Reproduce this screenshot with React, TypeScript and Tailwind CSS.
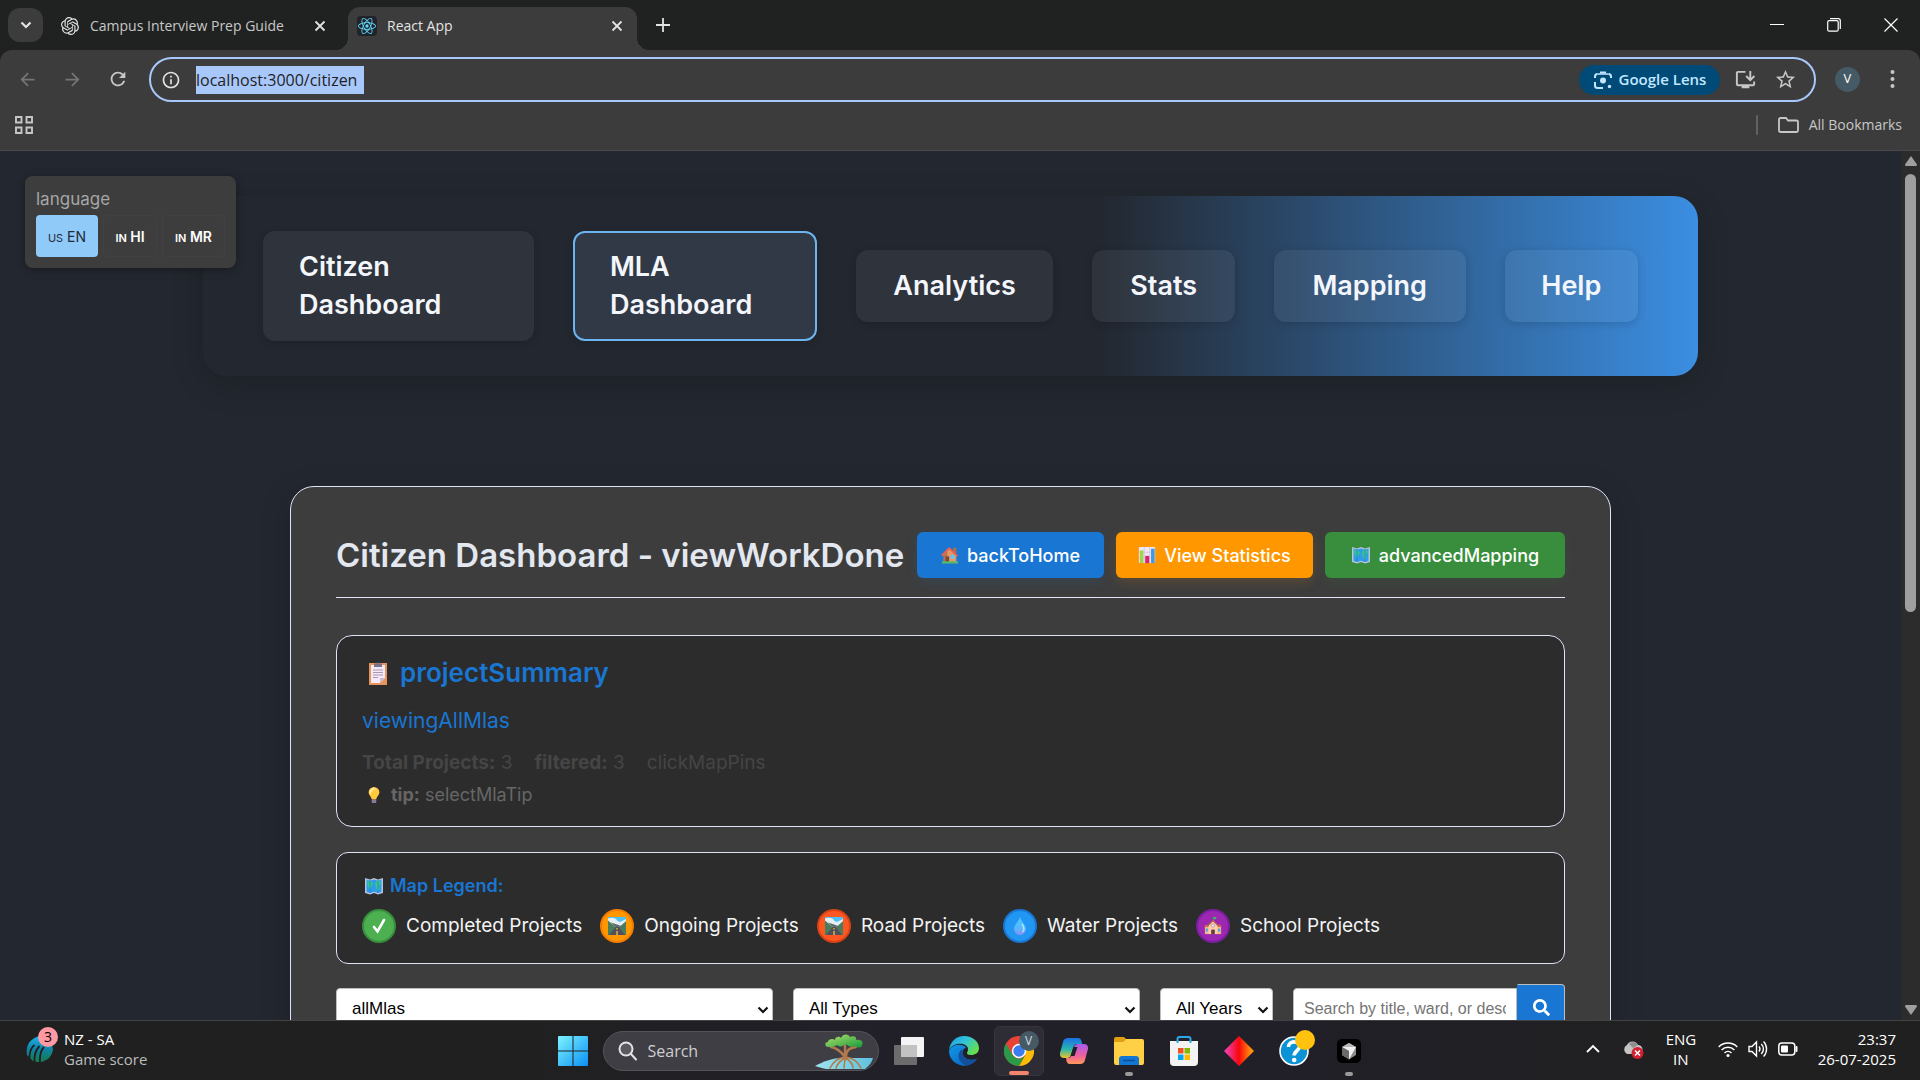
import React from "react";
import type { ReactNode } from "react";
import { SiOpenai, SiReact } from "react-icons/si";
import {
  MdArrowBack,
  MdArrowForward,
  MdInfoOutline,
  MdOutlineInstallDesktop,
  MdRefresh,
  MdStarBorder,
} from "react-icons/md";
import { FaSearch } from "react-icons/fa";

/* ---------- small drawings ---------- */

function ClipboardIcon() {
  return (
    <svg viewBox="0 0 20 24" className="h-6 w-5" aria-hidden="true">
      <rect x="1" y="2" width="18" height="22" fill="#e8935a" />
      <path d="M3 4h14v13l-5 5H3z" fill="#f3e9f7" />
      <path d="M12 22v-5h5z" fill="#cbb8d4" />
      <path d="M6 4V2.600h2.500a1.600 1.600 0 0 1 3 0H14V6H6z" fill="#7d7186" />
      <path d="M5 9h10M5 11.500h10M5 14h10M5 16.500h5" stroke="#a79ab0" strokeWidth="1" />
    </svg>
  );
}

function BulbIcon() {
  return (
    <svg viewBox="0 0 14 20" className="h-[18px] w-3.5" aria-hidden="true">
      <path d="M7 1a6 6 0 0 0-6 6c0 3 3 4.500 3.500 8h5C10 11.500 13 10 13 7a6 6 0 0 0-6-6z" fill="#ffc83d" />
      <path d="M7 2a5 5 0 0 0-5 5c0 1 .4 2 1 2.600C4 6 6 4 9 3.500 8.500 2.500 8 2 7 2z" fill="#ffe9a0" />
      <rect x="4.500" y="15" width="5" height="4" rx="1" fill="#8c7899" />
    </svg>
  );
}

function MapIcon() {
  return (
    <svg viewBox="0 0 20 20" className="h-5 w-5" aria-hidden="true">
      <path d="M1 2l5 1.500L10 2l4 1.500L19 2v15l-5 1.500L10 17l-4 1.500L1 17z" fill="#b8c4dd" />
      <path d="M2.500 3.500L6 4.700l4-1.300 4 1.300 3.500-1.200v12.500L14 17l-4-1.300L6 17l-3.500-1z" fill="#2f9bea" />
      <path d="M3 5l4 .5 2 2-2 3-1 3-2-3zM12 5l4 .2 1 2-2 2 .5 4-2 2-1.500-4-1-3z" fill="#37c98b" />
      <path d="M6 4v13M14 4v13" stroke="#1b78c9" strokeWidth=".7" />
    </svg>
  );
}

function HouseIcon() {
  return (
    <svg viewBox="0 0 20 20" className="h-[18px] w-[18px]" aria-hidden="true">
      <rect x="13.500" y="2" width="3.500" height="6" fill="#b56b4a" />
      <path d="M3 9l7-6 7 7v8H3z" fill="#e09a6a" />
      <path d="M3 9l4-4v13H3z" fill="#b8734f" />
      <path d="M9 1L0 10l1.500 1.500L9 4l8.500 8L19 10.500z" fill="#f0604d" />
      <rect x="5" y="11.500" width="4" height="6.500" fill="#7b4a3d" />
      <circle cx="13" cy="12" r="2.500" fill="#63c5f5" />
      <rect x="1" y="17" width="18" height="2.500" fill="#57b96a" />
    </svg>
  );
}

function ChartIcon() {
  return (
    <svg viewBox="0 0 20 20" className="h-[18px] w-[18px]" aria-hidden="true">
      <rect x="1" y="1" width="18" height="18" rx="1" fill="#efe6f3" />
      <path d="M1 7h18M1 13h18M7 1v18M13 1v18" stroke="#cfc0d8" strokeWidth=".8" />
      <rect x="2" y="5" width="4" height="14" fill="#9bd84f" />
      <rect x="8" y="11" width="4.500" height="8" fill="#d8246b" />
      <rect x="14.500" y="3" width="4" height="16" fill="#3b9ae8" />
    </svg>
  );
}

function RoadIcon() {
  return (
    <svg viewBox="0 0 18 18" className="h-[18px] w-[18px]" aria-hidden="true">
      <rect width="18" height="18" fill="#4a7d5b" />
      <path d="M0 0h18v4l-6 5H0z" fill="#4fc0f5" />
      <path d="M0 1.500C4 0 8 1 9.500 4l2.500 1 6-3v2l-6 5.500H6L1.500 14 0 13z" fill="#e6eef2" />
      <path d="M0 3.500L7 9.500 0 16z" fill="#4a7d5b" />
      <path d="M3 5.500l4 4h4l6 3-5-4z" fill="#5a6a68" />
      <path d="M1 18L8 9.500h2.500L17 18z" fill="#504f5b" />
      <path d="M9 11v1.500M9 14v4" stroke="#ffc83d" strokeWidth="1.200" />
    </svg>
  );
}

function DropIcon() {
  return (
    <svg viewBox="0 0 14 20" className="h-5 w-3.5" aria-hidden="true">
      <defs>
        <linearGradient id="drop" x1="0" y1="0" x2="0" y2="1">
          <stop offset="0" stopColor="#4cc6ff" />
          <stop offset=".6" stopColor="#55b9ff" />
          <stop offset="1" stopColor="#8f8cf5" />
        </linearGradient>
      </defs>
      <path d="M7 1c1 4 6 8 6 12a6 6 0 0 1-12 0C1 9 6 5 7 1z" fill="url(#drop)" />
      <path d="M9 8c2 3 2.500 6 .5 8" stroke="#a8e6ff" strokeWidth="1.500" fill="none" />
    </svg>
  );
}

function SchoolIcon() {
  return (
    <svg viewBox="0 0 20 20" className="h-[18px] w-[18px]" aria-hidden="true">
      <path d="M10 0v5" stroke="#6b5a70" strokeWidth="1" />
      <path d="M10 0h3.500v2.500H10z" fill="#38b668" />
      <rect x="1" y="11" width="18" height="8" fill="#f4b489" />
      <path d="M0 11h6V8.500H2zM14 11h6l-2-2.500h-4z" fill="#c9675a" />
      <path d="M5 9l5-5 5 5v10H5z" fill="#ffd0a8" />
      <path d="M4.500 9.500L10 4l5.500 5.500" stroke="#b75a50" strokeWidth="1.200" fill="none" />
      <circle cx="10" cy="9.500" r="1.800" fill="#efe8f5" stroke="#887592" strokeWidth=".6" />
      <rect x="2" y="13" width="2.500" height="3" fill="#4aa8ea" />
      <rect x="15.500" y="13" width="2.500" height="3" fill="#4aa8ea" />
      <rect x="8" y="14" width="4" height="5" fill="#5b3f48" />
    </svg>
  );
}

function CheckGlyph() {
  return (
    <svg viewBox="0 0 18 18" className="h-[18px] w-[18px]" aria-hidden="true">
      <path d="M4 10l3.500 4.500L14 3" fill="none" stroke="#fff" strokeWidth="2.600" strokeLinecap="round" />
    </svg>
  );
}

function LensIcon() {
  return (
    <svg viewBox="0 0 20 20" className="h-5 w-5" fill="none" stroke="#c2e7ff" strokeWidth="2" aria-hidden="true">
      <path d="M2 8V6.500A2.500 2.500 0 0 1 4.500 4M7 2.500h6M15.500 4A2.500 2.500 0 0 1 18 6.500V8M2 12v3.500A2.500 2.500 0 0 0 4.500 18H10" />
      <path d="M4.500 4h11" strokeWidth="1.500" />
      <circle cx="10" cy="10.500" r="3" fill="#c2e7ff" stroke="none" />
      <circle cx="16.500" cy="16.500" r="1.700" fill="#c2e7ff" stroke="none" />
    </svg>
  );
}

function CloseGlyph() {
  return (
    <svg viewBox="0 0 12 12" className="h-3 w-3" stroke="currentColor" strokeWidth="1.800" aria-hidden="true">
      <path d="M1.500 1.500l9 9M10.500 1.500l-9 9" />
    </svg>
  );
}

function SportIcon() {
  return (
    <svg viewBox="0 0 28 28" className="h-7 w-7" aria-hidden="true">
      <defs>
        <linearGradient id="ball" x1="0" y1="0" x2="0" y2="1">
          <stop offset="0" stopColor="#19b5ee" />
          <stop offset=".5" stopColor="#0f83a6" />
          <stop offset="1" stopColor="#157a4e" />
        </linearGradient>
      </defs>
      <path d="M1 20C-1 9 6 2 15 1c9 4 12 9 12 14-1 5-4 9-7 10l-4 2h-5l-4-1-3-3z" fill="url(#ball)" />
      <path d="M3.500 23c0-7 2-11 5-13M8.500 27c-.5-8 2-13 5-16M14 28c-.5-8 1-13 4-16" stroke="#202020" strokeWidth="1.800" fill="none" />
    </svg>
  );
}

function WindowsLogo() {
  return (
    <svg viewBox="0 0 30 30" className="h-[30px] w-[30px]" aria-hidden="true">
      <defs>
        <linearGradient id="win" x1="0" y1="0" x2="1" y2="1">
          <stop offset="0" stopColor="#7df3ff" />
          <stop offset="1" stopColor="#0a90f5" />
        </linearGradient>
      </defs>
      <path d="M1 0h13.500v14.500H0V1a1 1 0 0 1 1-1zM15.500 0H29a1 1 0 0 1 1 1v13.500H15.500zM0 15.500h14.500V30H1a1 1 0 0 1-1-1zM15.500 15.500H30V29a1 1 0 0 1-1 1H15.500z" fill="url(#win)" />
    </svg>
  );
}

function TreeIcon() {
  return (
    <svg viewBox="0 0 60 36" className="h-9 w-[60px]" aria-hidden="true">
      <defs>
        <linearGradient id="leaf" x1="0" y1="0" x2="1" y2="1">
          <stop offset="0" stopColor="#b5e36a" />
          <stop offset="1" stopColor="#159a3e" />
        </linearGradient>
        <linearGradient id="water" x1="0" y1="0" x2="1" y2="0">
          <stop offset="0" stopColor="#9fe3ee" />
          <stop offset="1" stopColor="#5fc0dd" />
        </linearGradient>
      </defs>
      <path d="M1 33c9-5 18-8 27-8h31c-1 4-4 8-8 11H12c-4-1-8-2-11-3z" fill="url(#water)" />
      <g fill="none" stroke="#b07a4c" strokeLinecap="round">
        <path d="M17 14c5 1 9 3 13 9M42 14c-6 1-9 2-10 9M31 12v14" strokeWidth="2.500" />
        <path d="M31 24c-7 1-12 5-15 11M31 25c-5 3-8 6-9 10M32 25c-2 4-2 7-2 10M32 24c7 1 12 5 15 11M32 25c4 3 7 6 7 10" strokeWidth="1.600" />
      </g>
      <path d="M14 14c-3 0-4-5 0-5 0-3 5-4 7-2 0-4 5-4 6-2 2-5 8-4 9-1 5-2 7 1 6 3 5-1 8 2 6 5 1 3-5 3-8 1-3 2-6 0-8-2-3 3-8 3-9 1-3 2-6 2-9 2z" fill="url(#leaf)" />
    </svg>
  );
}

function TaskViewIcon() {
  return (
    <svg viewBox="0 0 30 30" className="h-[30px] w-[30px]" aria-hidden="true">
      <rect x="0" y="9" width="23" height="20" rx="1" fill="#6c6c6c" />
      <rect x="7" y="1" width="23" height="20" rx="1" fill="#f4f4f4" />
      <path d="M7 9h16v12H7z" fill="#c2c2c2" />
    </svg>
  );
}

function EdgeIcon() {
  return (
    <svg viewBox="0 0 30 30" className="h-[30px] w-[30px]" aria-hidden="true">
      <defs>
        <linearGradient id="edgeTop" x1="0" y1="0" x2="1" y2=".6">
          <stop offset="0" stopColor="#1b9de2" />
          <stop offset=".5" stopColor="#2fc3dc" />
          <stop offset="1" stopColor="#66e04c" />
        </linearGradient>
        <linearGradient id="edgeLow" x1="0" y1="0" x2="1" y2="1">
          <stop offset="0" stopColor="#1199e8" />
          <stop offset="1" stopColor="#0a5cb8" />
        </linearGradient>
      </defs>
      <path d="M0 15a15 15 0 0 0 21 13.500c3-1 5-3 7-6-4 2-10 2-13-2-3-4-1-8 2-9-3-4-14-4-17 3.500z" fill="url(#edgeLow)" />
      <path d="M13 13c-5 4-5 12 3 16 6 0 9-2 12-6.500-4 2-10 2-13-2-2-3-2-5-2-7.500z" fill="#124f9d" />
      <path d="M0 14C1 6 7 0 15 0c9 0 15 6 15 12 0 5-4 7-8 7-3 0-4-1-4-2s1-1 1-4C19 7 5 5 0 14z" fill="url(#edgeTop)" />
    </svg>
  );
}

function ChromeIcon() {
  return (
    <svg viewBox="0 0 30 30" className="h-[30px] w-[30px]" aria-hidden="true">
      <circle cx="15" cy="15" r="15" fill="#ea4335" />
      <path d="M28 7.500A15 15 0 0 1 15 30l6.500-11.250L15 7.500z" fill="#fbbc04" />
      <path d="M2 7.500L8.500 18.750a7.500 7.500 0 0 0 13 0L15 30A15 15 0 0 1 2 7.500z" fill="#2a9a48" />
      <circle cx="15" cy="15" r="7.200" fill="#fff" />
      <circle cx="15" cy="15" r="5.700" fill="#3b7ded" />
    </svg>
  );
}

function CopilotIcon() {
  return (
    <svg viewBox="0 0 28 28" className="h-7 w-7" aria-hidden="true">
      <defs>
        <linearGradient id="copA" x1="0" y1="0" x2="0" y2="1">
          <stop offset="0" stopColor="#1c6fe8" />
          <stop offset=".55" stopColor="#27b5b0" />
          <stop offset="1" stopColor="#e8c52c" />
        </linearGradient>
        <linearGradient id="copB" x1="0" y1="0" x2="0" y2="1">
          <stop offset="0" stopColor="#a65cf0" />
          <stop offset=".6" stopColor="#f0609a" />
          <stop offset="1" stopColor="#ff9a57" />
        </linearGradient>
      </defs>
      <path d="M8 1h10c2 0 3 1 3.500 3l.5 3h-5c-2 0-3 1-3.600 3L11 18c-.6 2-2 3-4 3H4c-3 0-4.500-2-4-5L3 5c.8-3 2.500-4 5-4z" fill="url(#copA)" />
      <path d="M20 27H10c-2 0-3-1-3.500-3L6 21h2c2 0 3-1 3.600-3L14 10c.6-2 2-3 4-3h6c3 0 4.500 2 4 5l-3 11c-.8 3-2.500 4-5 4z" fill="url(#copB)" />
      <path d="M13.500 10h4L14.500 19h-4z" fill="#201f27" />
    </svg>
  );
}

function ExplorerIcon() {
  return (
    <svg viewBox="0 0 30 28" className="h-7 w-[30px]" aria-hidden="true">
      <path d="M0 2a2 2 0 0 1 2-2h8l3 3h-2L9 6H0z" fill="#e0a010" />
      <path d="M0 5h9l3-3h16a2 2 0 0 1 2 2v22a2 2 0 0 1-2 2H2a2 2 0 0 1-2-2z" fill="#ffcf46" />
      <path d="M5 28v-6a3 3 0 0 1 3-3h14a3 3 0 0 1 3 3v6z" fill="#1277d3" />
      <path d="M9 23.500h12" stroke="#0a4f98" strokeWidth="1.500" />
    </svg>
  );
}

function StoreIcon() {
  return (
    <svg viewBox="0 0 30 30" className="h-[30px] w-[30px]" aria-hidden="true">
      <path d="M1 5h28v21a4 4 0 0 1-4 4H5a4 4 0 0 1-4-4z" fill="#f3f3f3" />
      <path d="M8.500 7V3a2 2 0 0 1 2-2h9a2 2 0 0 1 2 2v4" fill="none" stroke="#29a9ea" strokeWidth="2" />
      <rect x="9" y="12" width="5.500" height="5.500" fill="#f25022" />
      <rect x="15.500" y="12" width="5.500" height="5.500" fill="#7fba00" />
      <rect x="9" y="18.500" width="5.500" height="5.500" fill="#00a4ef" />
      <rect x="15.500" y="18.500" width="5.500" height="5.500" fill="#ffb900" />
    </svg>
  );
}

function DiamondIcon() {
  return (
    <svg viewBox="0 0 30 30" className="h-[30px] w-[30px]" aria-hidden="true">
      <defs>
        <linearGradient id="gem" x1="0" y1="0" x2="1" y2="0">
          <stop offset=".1" stopColor="#f53aa5" />
          <stop offset=".5" stopColor="#f8060a" />
          <stop offset=".9" stopColor="#ff9410" />
        </linearGradient>
      </defs>
      <path d="M15 0l15 15-15 15L0 15z" fill="url(#gem)" />
    </svg>
  );
}

function HelpIcon() {
  return (
    <svg viewBox="0 0 30 30" className="h-[30px] w-[30px]" aria-hidden="true">
      <circle cx="15" cy="15" r="14" fill="#0c93d6" stroke="#fff" strokeWidth="1.600" />
      <path d="M9.500 11c0-7 11-6.500 11-.5 0 4.500-5.300 4-5.300 9" fill="none" stroke="#fff" strokeWidth="3.600" />
      <circle cx="15.200" cy="24" r="2.300" fill="#fff" />
    </svg>
  );
}

function CubeIcon() {
  return (
    <svg viewBox="0 0 24 24" className="h-6 w-6" aria-hidden="true">
      <rect width="24" height="24" rx="5" fill="#000" />
      <path d="M12 4l7 4v8l-7 4.500L5 16V8z" fill="#8c8c8c" />
      <path d="M5 8h14l-7 12.500V12z" fill="#efefef" />
      <path d="M5 8l7 4v8.500L5 16z" fill="#6a6a6a" />
      <path d="M12 4l7 4H5z" fill="#b9b9b9" />
    </svg>
  );
}

/* ---------- browser chrome ---------- */

function TabStrip() {
  return (
    <header className="flex h-[50px] shrink-0 items-end bg-[#202221] text-[#e3e3e3]">
      <button aria-label="Search tabs" className="mb-2 ml-2 flex h-[34px] w-[35px] items-center justify-center rounded-xl bg-[#3c3c3c]">
        <svg viewBox="0 0 12 12" className="h-3 w-3" fill="none" stroke="currentColor" strokeWidth="2.200" aria-hidden="true">
          <path d="M1.500 3.500L6 8l4.500-4.500" />
        </svg>
      </button>
      <div className="flex h-[43px] w-[305px] items-center pb-2 pl-[18px] pr-[22px] pt-0.5">
        <SiOpenai className="h-[18px] w-[18px]" />
        <span className="ml-[11px] flex-1 whitespace-nowrap text-[14px] text-[#c7c7c7]">Campus Interview Prep Guide</span>
        <button aria-label="Close Campus Interview Prep Guide"><CloseGlyph /></button>
      </div>
      <div className="relative flex h-[43px] w-[289px] items-center rounded-t-xl bg-[#3c3c3c] pb-2 pl-[9px] pr-3.5 pt-0.5">
        <span className="absolute -left-3 bottom-0 h-3 w-3 bg-[radial-gradient(circle_at_0_0,transparent_12px,#3c3c3c_12px)]" />
        <span className="absolute -right-3 bottom-0 h-3 w-3 bg-[radial-gradient(circle_at_100%_0,transparent_12px,#3c3c3c_12px)]" />
        <span className="flex h-5 w-5 items-center justify-center rounded-sm bg-[#20232a]">
          <SiReact className="h-[18px] w-[18px] text-[#61dafb]" />
        </span>
        <span className="ml-2.5 flex-1 text-[14px]">React App</span>
        <button aria-label="Close React App"><CloseGlyph /></button>
      </div>
      <button aria-label="New tab" className="mb-[18px] ml-[19px]">
        <svg viewBox="0 0 14 14" className="h-3.5 w-3.5" stroke="currentColor" strokeWidth="1.800" aria-hidden="true">
          <path d="M7 0v14M0 7h14" />
        </svg>
      </button>
      <div className="mb-[18px] ml-auto flex items-center gap-[43px] pr-[22px] text-white">
        <button aria-label="Minimize">
          <svg viewBox="0 0 14 14" className="h-3.5 w-3.5" stroke="currentColor" aria-hidden="true"><path d="M0 6.500h14" /></svg>
        </button>
        <button aria-label="Restore">
          <svg viewBox="0 0 14 14" className="h-3.5 w-3.5" fill="none" stroke="currentColor" strokeWidth="1.200" aria-hidden="true">
            <rect x=".7" y="2.700" width="10.500" height="10.500" rx="1.500" />
            <path d="M3 .7h8.300a2 2 0 0 1 2 2V11" />
          </svg>
        </button>
        <button aria-label="Close window">
          <svg viewBox="0 0 14 14" className="h-3.5 w-3.5" stroke="currentColor" strokeWidth="1.200" aria-hidden="true"><path d="M.5.5l13 13M13.500.5l-13 13" /></svg>
        </button>
      </div>
    </header>
  );
}

function Toolbar() {
  return (
    <div className="bg-[#202221]">
      <div className="flex h-[60px] items-center rounded-t-xl bg-[#3c3c3c] pb-0.5 text-[#c7c7c7]">
        <div className="ml-[17px] flex w-[132px] items-center gap-6">
          <button aria-label="Back"><MdArrowBack className="h-[21px] w-[21px] text-[#757575]" /></button>
          <button aria-label="Forward"><MdArrowForward className="h-[21px] w-[21px] text-[#757575]" /></button>
          <button aria-label="Reload"><MdRefresh className="h-[22px] w-[22px]" /></button>
        </div>
        <div className="mt-px flex h-[45px] flex-1 items-center rounded-full border-2 border-[#a8c7fa] bg-[#3c3c3c] pl-[10px] pr-[17px]">
          <MdInfoOutline className="h-5 w-5 shrink-0 text-[#e3e3e3]" />
          <label className="ml-[15px] flex flex-1 items-center">
            <span className="sr-only">Address</span>
            <input readOnly defaultValue="localhost:3000/citizen" className="h-7 w-[168px] bg-[#a8c7fa] text-[16px] text-[#1f1f1f] outline-none" />
          </label>
          <button className="flex h-[30px] w-[141px] items-center justify-center gap-1.5 rounded-full bg-[#004a77] text-[15px] font-semibold text-[#c2e7ff]">
            <LensIcon />
            Google Lens
          </button>
          <button aria-label="Install" className="ml-3.5"><MdOutlineInstallDesktop className="h-[23px] w-[23px]" /></button>
          <button aria-label="Bookmark this tab" className="ml-[17px]"><MdStarBorder className="h-[23px] w-[23px]" /></button>
        </div>
        <button aria-label="Profile" className="ml-[19px] flex h-[25px] w-[25px] items-center justify-center rounded-full bg-[#455a64] text-[13px] text-white">V</button>
        <button aria-label="Menu" className="ml-[30px] mr-[25px]">
          <svg viewBox="0 0 5 20" className="h-5 w-[5px]" fill="currentColor" aria-hidden="true">
            <circle cx="2.500" cy="3" r="2" /><circle cx="2.500" cy="10" r="2" /><circle cx="2.500" cy="17" r="2" />
          </svg>
        </button>
      </div>
      <div className="flex h-[41px] items-center border-b border-[#4a4a4a] bg-[#3c3c3c] pb-[11px] pl-[15px] pr-[18px] text-[#c7c7c7]">
        <button aria-label="Apps">
          <svg viewBox="0 0 18 18" className="h-[18px] w-[18px]" fill="none" stroke="currentColor" strokeWidth="1.900" aria-hidden="true">
            <path d="M1 1h5.500v5.500H1zM11.500 1H17v5.500h-5.500zM1 11.500h5.500V17H1zM11.500 11.500H17V17h-5.500z" />
          </svg>
        </button>
        <span className="ml-auto h-5 w-0.5 rounded bg-[#5f6368]" />
        <button className="ml-5 flex items-center gap-2.5 text-[14px]">
          <svg viewBox="0 0 21 16" className="h-4 w-[21px]" fill="none" stroke="currentColor" strokeWidth="1.800" aria-hidden="true">
            <path d="M1 2.500A1.500 1.500 0 0 1 2.500 1H8l2 2.500h8.500A1.500 1.500 0 0 1 20 5v8.500a1.500 1.500 0 0 1-1.500 1.500h-16A1.500 1.500 0 0 1 1 13.500z" />
          </svg>
          All Bookmarks
        </button>
      </div>
    </div>
  );
}

/* ---------- web page ---------- */

function LanguagePicker() {
  return (
    <div className="absolute left-[25px] top-[25px] z-10 rounded-lg bg-[#3d3d3d] px-[11px] pb-[11px] pt-[11px] shadow-[0_2px_10px_rgba(0,0,0,0.3)]">
      <div className="h-7 text-[17px] leading-6 text-[#a6a6a6]">language</div>
      <div className="flex gap-[5px] text-[14px] font-semibold text-white">
        <button className="h-[42px] w-[62px] rounded bg-[#90caf9] font-normal text-[#1f2937]"><span className="text-[11px]">US</span> EN</button>
        <button className="h-[42px] w-[54px] rounded border border-[#424242]"><span className="text-[11px]">IN</span> HI</button>
        <button className="h-[42px] w-[63px] rounded border border-[#424242]"><span className="text-[11px]">IN</span> MR</button>
      </div>
    </div>
  );
}

const navShort = ["Analytics", "Stats", "Mapping", "Help"];

function NavBar() {
  return (
    <nav className="mx-auto mt-[45px] grid h-[180px] w-full max-w-[1495px] grid-cols-[270fr_243fr_197fr_142fr_191fr_133fr] items-center gap-[39px] rounded-3xl bg-[linear-gradient(90deg,#23272f_60%,#3b8ee2_100%)] px-[60px] text-[27px] font-semibold leading-[38px] text-[#f3f6fb] shadow-[0_8px_32px_rgba(0,0,0,0.18)]">
      <a href="#citizen" className="flex h-[110px] items-center rounded-xl bg-white/6 px-9 shadow-[0_2px_8px_rgba(0,0,0,0.15)]">Citizen<br />Dashboard</a>
      <a href="#mla" className="flex h-[110px] items-center rounded-xl border-2 border-[#6cb4f0] bg-[#323946] px-[35px] shadow-[0_2px_8px_rgba(0,0,0,0.15)]">MLA<br />Dashboard</a>
      {navShort.map((name) => (
        <a key={name} href={"#" + name.toLowerCase()} className="flex h-[72px] items-center justify-center rounded-xl bg-white/6 shadow-[0_2px_8px_rgba(0,0,0,0.15)]">
          {name}
        </a>
      ))}
    </nav>
  );
}

function LegendItem({ tone, label, children }: { tone: string; label: string; children: ReactNode }) {
  return (
    <li className="flex items-center gap-2.5">
      <span className={"flex h-[34px] w-[34px] items-center justify-center rounded-full border-2 " + tone}>{children}</span>
      {label}
    </li>
  );
}

function PickArrow() {
  return (
    <svg viewBox="0 0 12 12" className="pointer-events-none absolute right-1 top-4 h-3 w-3" fill="none" stroke="#111" strokeWidth="2.200" aria-hidden="true">
      <path d="M1.500 3.500L6 8l4.500-4.500" />
    </svg>
  );
}

function Picker({ label, width }: { label: string; width: string }) {
  return (
    <label className={"relative mt-1 block h-[42px] " + width}>
      <span className="sr-only">{label}</span>
      <select className="h-full w-full appearance-none rounded border border-[#bdbdbd] bg-white px-[15px] text-black">
        <option>{label}</option>
      </select>
      <PickArrow />
    </label>
  );
}

function Dashboard() {
  return (
    <section className="mx-auto mt-[110px] w-full max-w-[1321px] rounded-3xl border border-[#dfe3f8] bg-[#3d3d3d] px-[45px] pb-12 pt-[45px] shadow-[0_8px_32px_rgba(0,0,0,0.18)]">
      <div className="flex items-center gap-3 border-b border-[#e3e6f5] pb-[19px] text-[18px] text-white">
        <h1 className="mr-auto whitespace-nowrap text-[33px] font-semibold leading-[46px] text-[#e3e8f0]">Citizen Dashboard - viewWorkDone</h1>
        <button className="flex h-[46px] w-[187px] items-center justify-center gap-2 rounded-md bg-[#1976d2] font-medium shadow-[0_4px_12px_rgba(25,118,210,0.15)]"><HouseIcon />backToHome</button>
        <button className="flex h-[46px] w-[197px] items-center justify-center gap-2 rounded-md bg-[#ff9800] font-medium shadow-[0_4px_12px_rgba(255,152,0,0.15)]"><ChartIcon />View Statistics</button>
        <button className="flex h-[46px] w-[240px] items-center justify-center gap-2 rounded-md bg-[#388e3c] font-medium shadow-[0_4px_12px_rgba(56,142,60,0.15)]"><MapIcon />advancedMapping</button>
      </div>

      <div className="mt-[37px] rounded-2xl border border-[#dfe3f8] bg-[#2c2c2c] px-[25px] pb-[15px] pt-[17px]">
        <h2 className="flex items-center gap-3 pl-1.5 text-[26px] font-semibold leading-10 text-[#1976d2]"><ClipboardIcon />projectSummary</h2>
        <p className="mt-3 text-[21px] leading-8 text-[#1976d2]">viewingAllMlas</p>
        <p className="mt-2.5 flex gap-[22px] text-[19px] leading-8 text-[#454545]">
          <span><b className="font-bold">Total Projects:</b> 3</span>
          <span><b className="font-bold">filtered:</b> 3</span>
          <span>clickMapPins</span>
        </p>
        <p className="flex items-center gap-2.5 pl-[5px] text-[18px] leading-8 text-[#666]">
          <BulbIcon /><span><b className="font-bold">tip:</b> selectMlaTip</span>
        </p>
      </div>

      <div className="mt-[25px] rounded-xl border border-[#dfe3f8] bg-[#2c2c2c] px-[25px] pb-5 pt-[19px]">
        <h3 className="flex items-center gap-1.5 pl-0.5 text-[18px] font-semibold leading-7 text-[#1976d2]"><MapIcon />Map Legend:</h3>
        <ul className="mt-[9px] flex gap-[18px] text-[19px] leading-7 text-[#f3f3f3]">
          <LegendItem tone="border-[#388e3c] bg-[#4caf50]" label="Completed Projects"><CheckGlyph /></LegendItem>
          <LegendItem tone="border-[#f57c00] bg-[#ff9800]" label="Ongoing Projects"><RoadIcon /></LegendItem>
          <LegendItem tone="border-[#d84315] bg-[#ff5722]" label="Road Projects"><RoadIcon /></LegendItem>
          <LegendItem tone="border-[#1976d2] bg-[#2196f3]" label="Water Projects"><DropIcon /></LegendItem>
          <LegendItem tone="border-[#7b1fa2] bg-[#9c27b0]" label="School Projects"><SchoolIcon /></LegendItem>
        </ul>
      </div>

      <div className="mt-5 flex gap-5 font-['Liberation_Sans',Arial,sans-serif] text-[17px]">
        <Picker label="allMlas" width="flex-[437]" />
        <Picker label="All Types" width="flex-[347]" />
        <Picker label="All Years" width="w-[113px]" />
        <div className="flex w-[272px]">
          <input aria-label="Search projects" placeholder="Search by title, ward, or description" className="mt-1 h-[42px] w-0 flex-1 rounded-l border border-[#bdbdbd] bg-white px-2.5 text-[16px] placeholder:text-[#757575]" />
          <button aria-label="Search" className="flex h-[46px] w-12 items-center justify-center rounded-r border border-[#bdbdbd] border-l-[#1976d2] bg-[#1976d2] text-white">
            <FaSearch className="h-[17px] w-[17px]" />
          </button>
        </div>
      </div>
    </section>
  );
}

function ScrollTrack() {
  return (
    <div className="flex w-[19px] shrink-0 flex-col items-center bg-[#2c2c2c] py-[5px]">
      <svg viewBox="0 0 12 10" className="h-2.5 w-3" fill="#9f9f9f" aria-hidden="true"><path d="M6 0l6 8.500q0 1.500-1 1.500H1Q0 10 0 8.500z" /></svg>
      <div className="mt-2 h-[438px] w-[11px] rounded-full bg-[#9f9f9f]" />
      <svg viewBox="0 0 12 10" className="mt-auto h-2.5 w-3" fill="#9f9f9f" aria-hidden="true"><path d="M6 10l6-8.500Q12 0 11 0H1Q0 0 0 1.500z" /></svg>
    </div>
  );
}

/* ---------- taskbar ---------- */

function TaskButton({ label, active, running, badge, children }: { label: string; active?: boolean; running?: boolean; badge?: ReactNode; children: ReactNode }) {
  return (
    <button aria-label={label} className={"relative flex h-[50px] w-[50px] items-center justify-center rounded-md " + (active ? "border border-[#36343c] bg-[#2e2c35]" : "")}>
      {children}
      {badge}
      {active && <span className="absolute bottom-0 h-1 w-5 rounded-full bg-[#f4846c]" />}
      {running && <span className="absolute bottom-0 h-1 w-2 rounded-full bg-[#9a9a9a]" />}
    </button>
  );
}

function Taskbar() {
  return (
    <footer className="grid h-[60px] shrink-0 grid-cols-[1fr_auto_1fr] items-center border-t border-[#434343] bg-[linear-gradient(90deg,#202020_25%,#211f28_45%,#211f28_65%,#202020_90%)] text-[15px] leading-5 text-white">
      <button className="flex items-center gap-2.5 justify-self-start pb-1 pl-[26px] text-left">
        <span className="relative">
          <SportIcon />
          <span className="absolute -top-2 left-3 flex h-5 w-5 items-center justify-center rounded-full bg-[#ff99a4] text-[14px] text-black">3</span>
        </span>
        <span>NZ - SA<br /><span className="text-[#bcbcbc]">Game score</span></span>
      </button>

      <div className="flex items-center gap-[5px] pl-px">
        <TaskButton label="Start"><WindowsLogo /></TaskButton>
        <label className="flex h-10 w-[276px] items-center rounded-full border border-[#55535a] bg-[#403e45] pl-3.5 pr-1">
          <svg viewBox="0 0 20 20" className="h-5 w-5 shrink-0" fill="none" stroke="#e3e3e3" strokeWidth="2" aria-hidden="true">
            <circle cx="8" cy="8" r="6.500" fill="#5b5960" /><path d="M13 13l5 5.500" strokeLinecap="round" />
          </svg>
          <input aria-label="Search Windows" placeholder="Search" className="ml-2.5 w-0 flex-1 bg-transparent text-[16px] outline-none placeholder:text-[#cfcfcf]" />
          <TreeIcon />
        </label>
        <TaskButton label="Task view"><TaskViewIcon /></TaskButton>
        <TaskButton label="Edge"><EdgeIcon /></TaskButton>
        <TaskButton label="Chrome" active badge={<span className="absolute right-1 top-1 flex h-5 w-5 items-center justify-center rounded-full bg-[#455a64] text-[12px] text-[#d5dde1]">V</span>}><ChromeIcon /></TaskButton>
        <TaskButton label="Copilot"><CopilotIcon /></TaskButton>
        <TaskButton label="File Explorer" running><ExplorerIcon /></TaskButton>
        <TaskButton label="Microsoft Store"><StoreIcon /></TaskButton>
        <TaskButton label="Diamond"><DiamondIcon /></TaskButton>
        <TaskButton label="Get help" badge={<span className="absolute right-1 top-1 h-5 w-5 rounded-full bg-[#ffc20e]" />}><HelpIcon /></TaskButton>
        <TaskButton label="Cursor" running><CubeIcon /></TaskButton>
      </div>

      <div className="flex items-center justify-self-end pb-1 pr-6">
        <button aria-label="Hidden icons">
          <svg viewBox="0 0 14 10" className="h-2.5 w-3.5" fill="none" stroke="#fff" strokeWidth="1.800" aria-hidden="true"><path d="M1 8l6-6 6 6" /></svg>
        </button>
        <button aria-label="Cloud storage" className="ml-[22px]">
          <svg viewBox="0 0 22 20" className="h-5 w-[22px]" aria-hidden="true">
            <path d="M5 15a5 5 0 0 1 0-9A6 6 0 0 1 16 6a4.500 4.500 0 0 1 0 9z" fill="#c4c4c4" />
            <path d="M7 5a5.500 5.500 0 0 1 9 1l-5 3z" fill="#8f8f8f" />
            <circle cx="15.500" cy="14" r="6" fill="#d32030" />
            <path d="M13 11.500l5 5M18 11.500l-5 5" stroke="#fff" strokeWidth="1.500" />
          </svg>
        </button>
        <button className="ml-[22px] w-[30px] text-center">ENG<br />IN</button>
        <div className="ml-[22px] flex items-center gap-2.5">
          <svg viewBox="0 0 20 18" className="h-[18px] w-5" fill="none" stroke="#fff" strokeWidth="1.500" aria-hidden="true">
            <path d="M.7 7a13 13 0 0 1 18.600 0M3.600 10a9 9 0 0 1 12.800 0M6.500 13a5 5 0 0 1 7 0" />
            <circle cx="10" cy="15.500" r="1.600" fill="#fff" stroke="none" />
          </svg>
          <svg viewBox="0 0 20 18" className="h-[18px] w-5" fill="none" stroke="#fff" strokeWidth="1.400" aria-hidden="true">
            <path d="M1 6.500h3L8.500 2v14L4 11.500H1zM11 6.500a4 4 0 0 1 0 5M13.300 4a7 7 0 0 1 0 10M15.600 1.500a11 11 0 0 1 0 15" />
          </svg>
          <svg viewBox="0 0 20 14" className="h-3.5 w-5" fill="none" stroke="#fff" strokeWidth="1.500" aria-hidden="true">
            <rect x=".8" y="1" width="16" height="12" rx="3" /><rect x="3" y="3.500" width="7" height="7" rx="1" fill="#fff" stroke="none" /><path d="M18.500 5v4" strokeWidth="2" strokeLinecap="round" />
          </svg>
        </div>
        <button className="ml-5 text-right">23:37<br />26-07-2025</button>
      </div>
    </footer>
  );
}

export default function App() {
  return (
    <div className="flex h-screen flex-col overflow-hidden bg-[#22262f] font-['Open_Sans','Noto_Sans',sans-serif]">
      <TabStrip />
      <Toolbar />
      <div className="flex min-h-0 flex-1">
        <main className="relative min-w-0 flex-1 overflow-hidden bg-[#23272f] font-[Inter,sans-serif]">
          <LanguagePicker />
          <NavBar />
          <Dashboard />
        </main>
        <ScrollTrack />
      </div>
      <Taskbar />
    </div>
  );
}
